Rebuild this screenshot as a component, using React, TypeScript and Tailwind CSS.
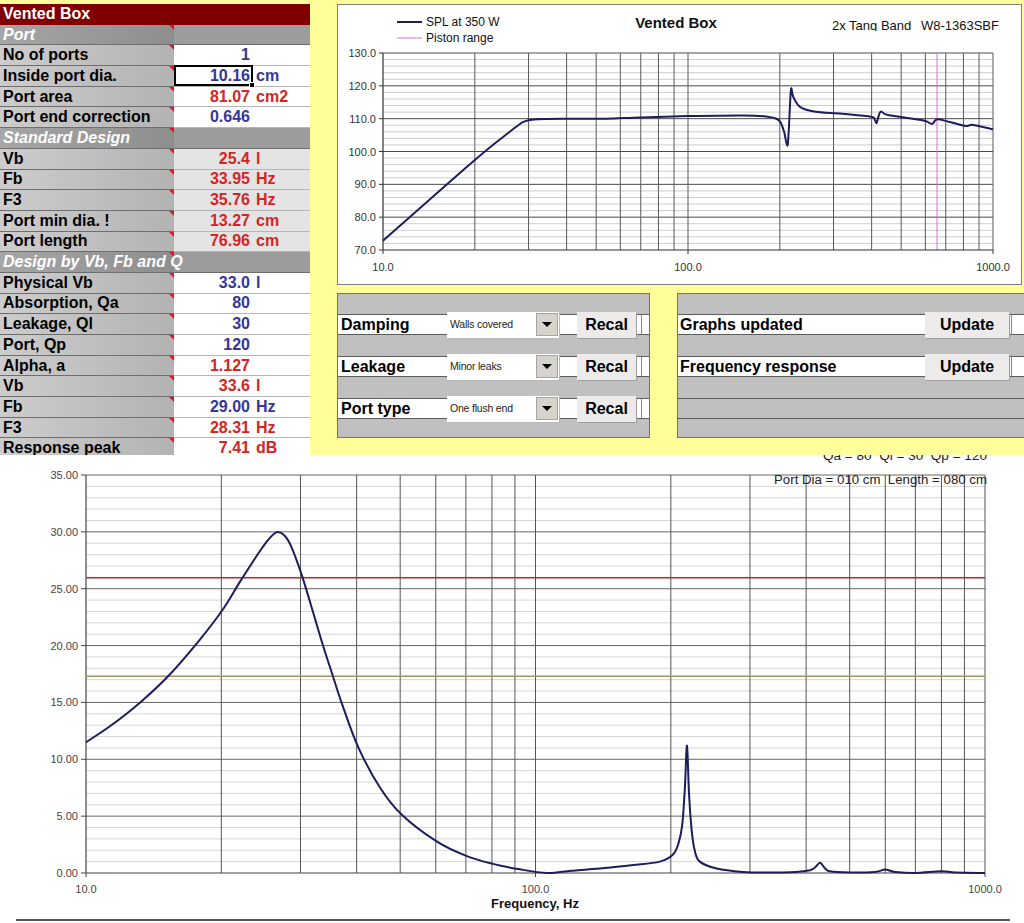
import type { ReactNode } from 'react'

type Tone = 'blue' | 'red'

type Row =
  | { kind: 'title'; label: string }
  | { kind: 'section'; label: string }
  | {
      kind: 'value'
      label: string
      value: string
      unit?: string
      tone: Tone
      shade?: boolean
      selected?: boolean
    }

const rows: Row[] = [
  { kind: 'title', label: 'Vented Box' },
  { kind: 'section', label: 'Port' },
  { kind: 'value', label: 'No of ports', value: '1', tone: 'blue' },
  { kind: 'value', label: 'Inside port dia.', value: '10.16', unit: 'cm', tone: 'blue', selected: true },
  { kind: 'value', label: 'Port area', value: '81.07', unit: 'cm2', tone: 'red' },
  { kind: 'value', label: 'Port end correction', value: '0.646', tone: 'blue' },
  { kind: 'section', label: 'Standard Design' },
  { kind: 'value', label: 'Vb', value: '25.4', unit: 'l', tone: 'red', shade: true },
  { kind: 'value', label: 'Fb', value: '33.95', unit: 'Hz', tone: 'red', shade: true },
  { kind: 'value', label: 'F3', value: '35.76', unit: 'Hz', tone: 'red', shade: true },
  { kind: 'value', label: 'Port min dia. !', value: '13.27', unit: 'cm', tone: 'red', shade: true },
  { kind: 'value', label: 'Port length', value: '76.96', unit: 'cm', tone: 'red', shade: true },
  { kind: 'section', label: 'Design by Vb, Fb and Q' },
  { kind: 'value', label: 'Physical Vb', value: '33.0', unit: 'l', tone: 'blue' },
  { kind: 'value', label: 'Absorption, Qa', value: '80', tone: 'blue' },
  { kind: 'value', label: 'Leakage, Ql', value: '30', tone: 'blue' },
  { kind: 'value', label: 'Port, Qp', value: '120', tone: 'blue' },
  { kind: 'value', label: 'Alpha, a', value: '1.127', tone: 'red' },
  { kind: 'value', label: 'Vb', value: '33.6', unit: 'l', tone: 'red' },
  { kind: 'value', label: 'Fb', value: '29.00', unit: 'Hz', tone: 'blue' },
  { kind: 'value', label: 'F3', value: '28.31', unit: 'Hz', tone: 'red' },
  { kind: 'value', label: 'Response peak', value: '7.41', unit: 'dB', tone: 'red' },
]

// SPL at 350 W, [Hz, dB]
const splData: [number, number][] = [
  [10, 72.8], [20, 97.4], [25.8, 105.7], [29.0, 109.1], [32.2, 109.8], [40, 110.0],
  [53.8, 110.0], [70, 110.4], [100, 110.8], [152, 111.0], [180, 110.7], [195, 110.0],
  [201, 108.9], [206.6, 106.0], [211.4, 101.8], [213.7, 105.5], [217.5, 118.7],
  [221.3, 116.7], [233, 113.6], [262, 112.1], [320, 111.5], [398, 110.6], [410, 109.6],
  [416, 108.8], [427.7, 112.1], [453, 111.1], [581, 109.6], [610, 109.0], [632, 108.4],
  [656, 109.8], [720, 109.0], [816, 107.8], [860, 108.1], [1000, 106.8],
]

// lower graph, [Hz, value]
const lowData: [number, number][] = [
  [10, 11.5], [11.3, 12.9], [13.2, 15.0], [15.4, 17.5], [17.9, 20.5], [20.1, 23.1],
  [22.0, 25.6], [23.8, 27.7], [25.2, 29.1], [26.5, 29.95], [27.6, 29.7], [28.7, 28.6],
  [30.2, 26.2], [31.8, 23.3], [33.5, 20.3], [35.3, 17.5], [37.1, 14.9], [40.3, 11.1],
  [45.1, 7.5], [50.5, 5.1], [60.4, 2.75], [70.1, 1.5], [80.4, 0.8], [91.4, 0.35],
  [106, 0.0], [120, 0.2], [139, 0.4], [165, 0.7], [189, 1.0], [202, 1.6], [208, 2.6],
  [212, 4.2], [215, 7.5], [217.3, 11.2], [219.5, 7.0], [222.5, 3.8], [226, 2.0],
  [232, 1.0], [253, 0.4], [289, 0.1], [330, 0.05], [380, 0.1], [408, 0.25], [419, 0.5],
  [429.5, 0.9], [440, 0.45], [452, 0.15], [500, 0.05], [570, 0.1], [600, 0.3],
  [630, 0.1], [700, 0.0], [800, 0.15], [860, 0.05], [1000, 0.0],
]

const decadeLines = [20, 30, 40, 50, 60, 70, 80, 90, 100, 200, 300, 400, 500, 600, 700, 800, 900, 1000]

const chartFont = 'Liberation Sans, Arial, sans-serif'

function smoothPath(pts: [number, number][]) {
  let d = `M${pts[0][0].toFixed(1)},${pts[0][1].toFixed(1)}`
  for (let i = 0; i < pts.length - 1; i++) {
    const p0 = pts[i - 1] ?? pts[i]
    const p1 = pts[i]
    const p2 = pts[i + 1]
    const p3 = pts[i + 2] ?? p2
    const c1x = p1[0] + (p2[0] - p0[0]) / 6
    const c1y = p1[1] + (p2[1] - p0[1]) / 6
    const c2x = p2[0] - (p3[0] - p1[0]) / 6
    const c2y = p2[1] - (p3[1] - p1[1]) / 6
    d += ` C${c1x.toFixed(1)},${c1y.toFixed(1)} ${c2x.toFixed(1)},${c2y.toFixed(1)} ${p2[0].toFixed(1)},${p2[1].toFixed(1)}`
  }
  return d
}

function Marker() {
  return (
    <span className="absolute right-0 top-0 h-0 w-0 border-l-[5px] border-t-[5px] border-l-transparent border-t-[#e3141b]" />
  )
}

function TableRow({ row }: { row: Row }) {
  if (row.kind === 'title') {
    return (
      <div className="flex h-[20.7px] items-center bg-[#800000] pl-[3px] text-[16px] font-bold leading-none text-white">
        {row.label}
      </div>
    )
  }
  if (row.kind === 'section') {
    return (
      <div className="flex h-[20.7px]">
        <div className="relative flex w-[174px] items-center whitespace-nowrap border-b border-[#6e6e6e] bg-linear-to-r from-[#a6a6a6] to-[#8e8e8e] pl-[3px] text-[16px] font-bold italic leading-none text-white">
          {row.label}
          <Marker />
        </div>
        <div className="flex-1 border-b border-[#6e6e6e] bg-[#9c9c9c]" />
      </div>
    )
  }
  return (
    <div className="flex h-[20.7px]">
      <div className="relative flex w-[174px] items-center border-b border-[#6e6e6e] bg-linear-to-r from-[#cdcdcd] to-[#b3b3b3] pl-[3px] text-[16px] font-bold leading-none text-black">
        {row.label}
        <Marker />
      </div>
      <div
        className={`relative flex flex-1 items-center border-b border-[#b6b6b6] text-[16px] font-bold leading-none ${
          row.shade ? 'bg-[#e4e4e4]' : 'bg-white'
        } ${row.tone === 'blue' ? 'text-[#35359b]' : 'text-[#d42424]'}`}
      >
        <span className="w-[76px] text-right">{row.value}</span>
        {row.unit && <span className="pl-[6px]">{row.unit}</span>}
        {row.selected && (
          <span className="absolute left-0 top-[-1px] h-[21px] w-[79px] border-2 border-black">
            <span className="absolute bottom-[-4px] right-[-4px] h-[6px] w-[6px] border border-white bg-black" />
          </span>
        )}
      </div>
    </div>
  )
}

function Dropdown({ text }: { text: string }) {
  return (
    <div className="flex h-[26px] w-[112px] shrink-0 items-center bg-white shadow-[1px_1px_0_#b8b8b8]">
      <span className="flex-1 pl-[3px] text-[10.5px] tracking-[-0.2px] text-[#222]">{text}</span>
      <span className="mr-[1px] flex h-[23px] w-[22px] items-center justify-center border border-[#a4a4a4] bg-[#d6d3cc]">
        <span className="h-0 w-0 border-x-[5px] border-t-[5px] border-x-transparent border-t-black" />
      </span>
    </div>
  )
}

function FormButton({ label, width }: { label: string; width: string }) {
  return (
    <div
      className={`flex h-[26px] shrink-0 items-center justify-center bg-[#ecebea] text-[16px] font-bold text-black shadow-[1px_1px_0_#9e9e9e] ${width}`}
    >
      {label}
    </div>
  )
}

function Gap({ h = 'h-[21px]', lined = false }: { h?: string; lined?: boolean }) {
  return <div className={`${h} ${lined ? 'border-y border-[#5c5c5c]' : ''}`} />
}

function ControlRow({ label, option }: { label: string; option: string }) {
  return (
    <div className="flex h-[21px] items-center border-y border-[#5c5c5c] bg-white">
      <span className="w-[109px] shrink-0 pl-[3px] text-[16px] font-bold">{label}</span>
      <Dropdown text={option} />
      <span className="w-[18px] shrink-0" />
      <FormButton label="Recal" width="w-[59px]" />
      <span className="ml-[5px] h-full flex-1 border-l border-[#8a8a8a]" />
    </div>
  )
}

function UpdateRow({ label }: { label: string }) {
  return (
    <div className="flex h-[21px] items-center border-y border-[#5c5c5c] bg-white">
      <span className="w-[247px] shrink-0 pl-[2px] text-[16px] font-bold">{label}</span>
      <FormButton label="Update" width="w-[84px]" />
      <span className="ml-[2px] h-full flex-1 border-l border-[#8a8a8a]" />
    </div>
  )
}

function SplChart() {
  const x = (f: number) => 383 + 305 * Math.log10(f / 10)
  const y = (db: number) => 250 - ((db - 70) * 197) / 60
  const minor: number[] = []
  for (let v = 72; v < 130; v += 2) if (v % 10 !== 0) minor.push(v)
  const major = [80, 90, 100, 110, 120, 130]
  const labels = [130, 120, 110, 100, 90, 80, 70]
  const pts = splData.map(([f, v]) => [x(f), y(v)] as [number, number])
  return (
    <svg viewBox="338 5 683 279" className="block h-[279px] w-[683px]">
      <defs>
        <clipPath id="subtitle-clip">
          <rect x="820" y="5" width="200" height="26" />
        </clipPath>
      </defs>
      {minor.map((v) => (
        <line key={v} x1={383} x2={993} y1={y(v)} y2={y(v)} stroke="#cdcdcd" strokeWidth={1} />
      ))}
      {major.map((v) => (
        <line key={v} x1={383} x2={993} y1={y(v)} y2={y(v)} stroke="#4a4a4a" strokeWidth={1} />
      ))}
      {decadeLines.map((f) => (
        <line key={f} x1={x(f)} x2={x(f)} y1={53} y2={250} stroke="#5a5a5a" strokeWidth={1} />
      ))}
      <line x1={937} x2={937} y1={53} y2={250} stroke="#d070d0" strokeWidth={1} />
      <line x1={383} x2={383} y1={53} y2={250} stroke="#333" strokeWidth={1.2} />
      <line x1={383} x2={993} y1={250} y2={250} stroke="#333" strokeWidth={1.2} />
      {labels.map((v) => (
        <g key={v}>
          <line x1={379} x2={383} y1={y(v)} y2={y(v)} stroke="#333" />
          <text x={376} y={y(v) + 4} textAnchor="end" fontSize={11} fill="#333" fontFamily={chartFont}>
            {v.toFixed(1)}
          </text>
        </g>
      ))}
      {[10, 100, 1000].map((f) => (
        <g key={f}>
          <line x1={x(f)} x2={x(f)} y1={250} y2={254} stroke="#333" />
          <text x={x(f)} y={271} textAnchor="middle" fontSize={11} fill="#333" fontFamily={chartFont}>
            {f.toFixed(1)}
          </text>
        </g>
      ))}
      <path d={smoothPath(pts)} fill="none" stroke="#1d1d5c" strokeWidth={2} strokeLinejoin="round" />

      <line x1={397} x2={422} y1={22} y2={22} stroke="#1d1d5c" strokeWidth={2} />
      <text x={426} y={26} fontSize={12} fill="#111" fontFamily={chartFont}>
        SPL at 350 W
      </text>
      <line x1={397} x2={422} y1={38} y2={38} stroke="#d070d0" strokeWidth={1} />
      <text x={426} y={42} fontSize={12} fill="#111" fontFamily={chartFont}>
        Piston range
      </text>
      <text x={676} y={28} textAnchor="middle" fontSize={15} fontWeight="bold" fill="#111" fontFamily={chartFont}>
        Vented Box
      </text>
      <g clipPath="url(#subtitle-clip)">
        <text x={832} y={30} fontSize={13} fill="#111" fontFamily={chartFont}>
          2x Tang Band
        </text>
        <text x={999} y={30} textAnchor="end" fontSize={13} fill="#111" fontFamily={chartFont}>
          W8-1363SBF
        </text>
      </g>
    </svg>
  )
}

function ResponseChart() {
  const x = (f: number) => 86 + 449.5 * Math.log10(f / 10)
  const y = (v: number) => 873 - v * (398 / 35)
  const minor: number[] = []
  for (let v = 1; v < 35; v++) if (v % 5 !== 0) minor.push(v)
  const major = [5, 10, 15, 20, 25, 30, 35]
  const labels = [35, 30, 25, 20, 15, 10, 5, 0]
  const pts = lowData.map(([f, v]) => [x(f), y(v)] as [number, number])
  return (
    <svg viewBox="0 455 1024 468" className="block h-[468px] w-[1024px]">
      {minor.map((v) => (
        <line key={v} x1={86} x2={985} y1={y(v)} y2={y(v)} stroke="#d6d6d6" strokeWidth={1} />
      ))}
      {major.map((v) => (
        <line key={v} x1={86} x2={985} y1={y(v)} y2={y(v)} stroke="#666" strokeWidth={1} />
      ))}
      {decadeLines.map((f) => (
        <line key={f} x1={x(f)} x2={x(f)} y1={475} y2={873} stroke="#555" strokeWidth={1} />
      ))}
      <line x1={86} x2={86} y1={475} y2={873} stroke="#444" strokeWidth={1.2} />
      <line x1={86} x2={985} y1={873} y2={873} stroke="#444" strokeWidth={1.2} />
      <line x1={86} x2={985} y1={y(25.97)} y2={y(25.97)} stroke="#b82a2a" strokeWidth={1.6} />
      <line x1={86} x2={985} y1={y(17.3)} y2={y(17.3)} stroke="#a8915e" strokeWidth={1.4} />
      {labels.map((v) => (
        <g key={v}>
          <line x1={81} x2={86} y1={y(v)} y2={y(v)} stroke="#444" />
          <text x={78} y={y(v) + 4} textAnchor="end" fontSize={11} fill="#444" fontFamily={chartFont}>
            {v.toFixed(2)}
          </text>
        </g>
      ))}
      {[10, 100, 1000].map((f) => (
        <g key={f}>
          <line x1={x(f)} x2={x(f)} y1={873} y2={877} stroke="#444" />
          <text x={x(f)} y={893} textAnchor="middle" fontSize={11} fill="#444" fontFamily={chartFont}>
            {f.toFixed(1)}
          </text>
        </g>
      ))}
      <path d={smoothPath(pts)} fill="none" stroke="#1d1d5c" strokeWidth={2} strokeLinejoin="round" />
      <text
        x={823}
        y={460}
        fontSize={12.5}
        fill="#222"
        className="whitespace-pre"
        textLength={164}
        lengthAdjust="spacingAndGlyphs"
        fontFamily={chartFont}
      >
        {'Qa = 80  Ql = 30  Qp = 120'}
      </text>
      <text
        x={774}
        y={484}
        fontSize={12.5}
        fill="#222"
        className="whitespace-pre"
        textLength={213}
        lengthAdjust="spacingAndGlyphs"
        fontFamily={chartFont}
      >
        {'Port Dia = 010 cm  Length = 080 cm'}
      </text>
      <text x={535} y={908} textAnchor="middle" fontSize={13} fontWeight="bold" fill="#111" fontFamily={chartFont}>
        Frequency, Hz
      </text>
      <line x1={16} x2={1010} y1={920} y2={920} stroke="#555" strokeWidth={2} />
    </svg>
  )
}

function Panel({ children, width }: { children: ReactNode; width: string }) {
  return (
    <div className={`flex h-[145px] shrink-0 flex-col border border-[#75755f] bg-[#c0c0c0] ${width}`}>{children}</div>
  )
}

export default function App() {
  return (
    <div className="h-[923px] w-[1024px] overflow-hidden bg-white font-['Liberation_Sans',Arial,sans-serif]">
      <div className="flex h-[455px] overflow-hidden bg-[#ffff99]">
        <div className="w-[310px] shrink-0 pt-[4px]">
          {rows.map((row, i) => (
            <TableRow key={i} row={row} />
          ))}
        </div>

        <div className="flex flex-1 flex-col pl-[27px] pt-[4px]">
          <div className="h-[281px] w-[685px] border border-[#7f7f7f] bg-white">
            <SplChart />
          </div>

          <div className="mt-[8px] flex gap-[27px]">
            <Panel width="w-[313px]">
              <Gap h="h-[20px]" />
              <ControlRow label="Damping" option="Walls covered" />
              <Gap />
              <ControlRow label="Leakage" option="Minor leaks" />
              <Gap />
              <ControlRow label="Port type" option="One flush end" />
              <Gap h="flex-1" />
            </Panel>
            <Panel width="w-[350px] border-r-0">
              <Gap h="h-[20px]" />
              <UpdateRow label="Graphs updated" />
              <Gap />
              <UpdateRow label="Frequency response" />
              <Gap />
              <Gap lined />
              <Gap h="flex-1" />
            </Panel>
          </div>
        </div>
      </div>

      <ResponseChart />
    </div>
  )
}
